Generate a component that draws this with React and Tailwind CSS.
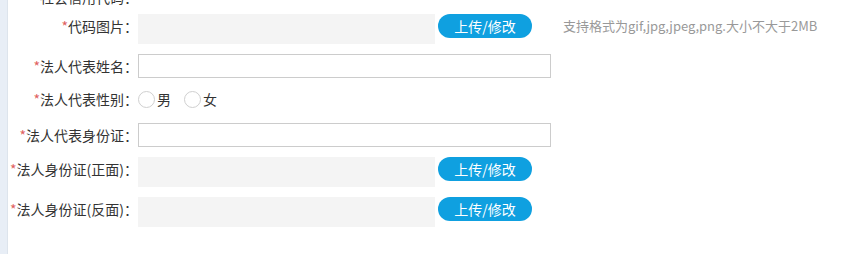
import React from 'react';

const Label = ({ text, star = true }) => (
    <div className="w-[130px] shrink-0 text-right text-[14px] text-[#333]">
        {star && <span className="text-[#e06060]">*</span>}
        {text}：
    </div>
);

const UploadRow = ({ label, hint, className }) => (
    <div className={`flex items-start ${className}`}>
        <div className="h-[24px] flex items-center">
            <Label text={label} />
        </div>
        <div className="w-[297px] h-[30px] bg-[#f4f4f4]" />
        <button className="ml-[3px] w-[94px] h-[24px] rounded-full bg-[#0fa0e0] text-white text-[14px] flex items-center justify-center">
            上传/修改
        </button>
        {hint && (
            <div className="ml-[31px] h-[24px] flex items-center text-[13px] text-[#999]">{hint}</div>
        )}
    </div>
);

const InputRow = ({ label, className }) => (
    <div className={`flex items-center ${className}`}>
        <Label text={label} />
        <input type="text" className="w-[413px] h-[24px] border border-[#cccccc] bg-white outline-none" />
    </div>
);

const Radio = ({ label }) => (
    <label className="flex items-center gap-[2px] mr-[13px]">
        <span className="w-[17px] h-[17px] rounded-full border border-[#d0d0d0] bg-white" />
        <span className="text-[14px] text-[#333]">{label}</span>
    </label>
);

export default function App() {
    return (
        <div
            className="flex w-[841px] h-[254px] overflow-hidden bg-white"
            style={{ fontFamily: '"Noto Sans CJK SC", "Noto Sans", sans-serif' }}
        >
            <div className="w-[8px] h-full bg-[#e8eef6] border-r border-[#dde4ec] shrink-0" />
            <div className="flex-1 flex flex-col">
                <div className="h-[14px] overflow-hidden relative">
                    <div className="absolute top-[-13px] left-0">
                        <Label text="社会信用代码" star={false} />
                    </div>
                </div>
                <UploadRow label="代码图片" hint="支持格式为gif,jpg,jpeg,png.大小不大于2MB" />
                <InputRow label="法人代表姓名" className="mt-[10px]" />
                <div className="flex items-center mt-[9px] h-[24px]">
                    <Label text="法人代表性别" />
                    <Radio label="男" />
                    <Radio label="女" />
                </div>
                <InputRow label="法人代表身份证" className="mt-[12px]" />
                <UploadRow label="法人身份证(正面)" className="mt-[10px]" />
                <UploadRow label="法人身份证(反面)" className="mt-[10px]" />
            </div>
        </div>
    );
}
